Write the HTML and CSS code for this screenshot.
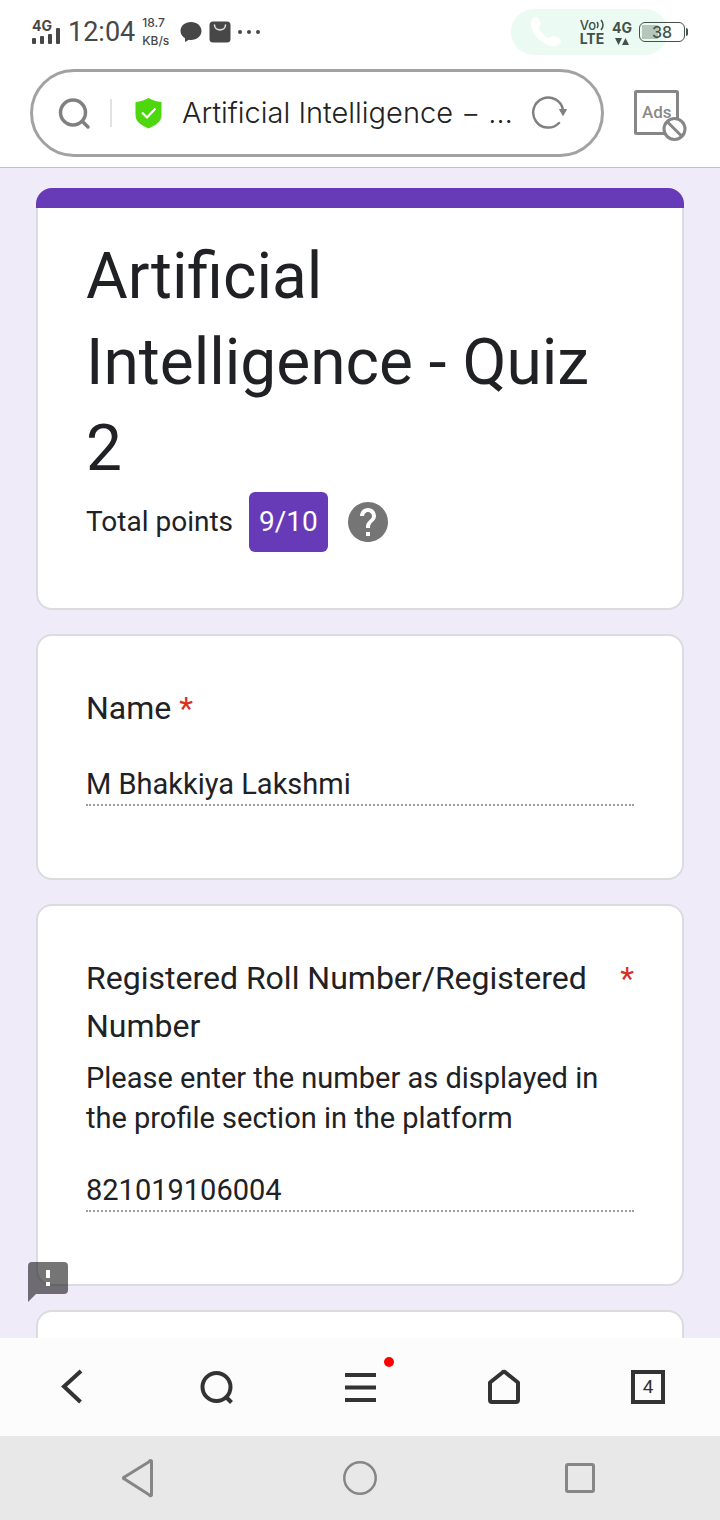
FILE: index.html
```html
<!DOCTYPE html>
<html lang="en">
<head>
<meta charset="utf-8">
<meta name="viewport" content="width=device-width, initial-scale=1">
<title>Artificial Intelligence - Quiz 2</title>
<link rel="stylesheet" href="styles.css">
</head>
<body>
<div class="screen">
  <div class="status">
    <div class="status-side">
      <span class="signal">
        <span class="signal-type">4G</span>
        <svg width="28" height="16" viewBox="0 0 28 16" fill="#474747"><rect x="0" y="10" width="4" height="6" rx="1"/><rect x="8" y="8" width="4" height="8" rx="1"/><rect x="16" y="6" width="4" height="10" rx="1"/><rect x="24" y="0" width="4" height="16" rx="1"/></svg>
      </span>
      <span class="clock">12:04</span>
      <span class="speed"><span>18.7</span><span>KB/s</span></span>
      <svg class="status-chat" width="22" height="22" viewBox="0 0 22 22" fill="#474747"><path d="M11 1C5 1 .5 4.800 .5 10c0 3 1.700 5.600 4.500 7.200V21l4-2.300c.7.100 1.300.2 2 .2 6 0 10.500-3.800 10.500-8.900S17 1 11 1z"/></svg>
      <svg width="22" height="22" viewBox="0 0 22 22"><rect x=".5" y=".5" width="21" height="21" rx="3.500" fill="#474747"/><path d="M5.500 4c0 6.500 11 6.500 11 0" fill="none" stroke="#ddd" stroke-width="1.600" stroke-linecap="round"/></svg>
      <svg width="22" height="4" viewBox="0 0 22 4" fill="#474747"><circle cx="2" cy="2" r="2"/><circle cx="11" cy="2" r="2"/><circle cx="20" cy="2" r="2"/></svg>
    </div>
    <div class="call">
      <svg width="32" height="32" viewBox="0 0 32 32" fill="#fff"><path d="M3 2C7-1 9 2 10.500 6c1 2.500-.5 4-2 5.500 2 5 5.500 8.500 10.500 11 1.500-2 3.500-3 6-2 4 1.500 8 3.500 5 7-2.500 3.500-8 4-14 .5C8 24 2.500 17 1 10 .3 6 1 3.500 3 2z"/></svg>
    </div>
    <div class="status-side status-right">
      <span class="volte"><span class="volte-top">Vo<svg width="9" height="12" viewBox="0 0 9 12" fill="none" stroke="#44514a" stroke-width="1.500"><path d="M1 3q2 3 0 6M5 1q4 5 0 10"/></svg></span><span>LTE</span></span>
      <span class="net"><span>4G</span><svg width="14" height="8" viewBox="0 0 14 8" fill="#44514a"><path d="M0 1h7L3.500 8zM7 8h7L10.500 1z"/></svg></span>
      <span class="battery"><span>38</span></span>
    </div>
  </div>

  <header class="toolbar">
    <div class="address">
      <svg width="34" height="34" viewBox="0 0 34 34" fill="none" stroke="#808080" stroke-width="3.500" stroke-linecap="round"><circle cx="15" cy="16.500" r="12.500"/><path d="M24.500 25.500l5.500 5.500"/></svg>
      <span class="divider"></span>
      <svg width="28" height="32" viewBox="0 0 28 32"><path d="M13.500 1c4 2.500 8 3.500 13 4v13c0 7-6 10.500-13 13.500C6.500 28.500.5 25 .5 18V5c5-.5 9-1.500 13-4z" fill="#4cd80c"/><path d="M7 15.500l5 5 8.500-9" fill="none" stroke="#fff" stroke-width="2.200"/></svg>
      <a class="address-title" href="#quiz">Artificial Intelligence − …</a>
      <button class="icon-button" type="button" aria-label="Reload"><svg width="36" height="36" viewBox="0 0 36 36"><path d="M28 28A15 15 0 1 1 32 15" fill="none" stroke="#808080" stroke-width="2.500" stroke-linecap="round"/><path d="M28.500 14.500h7l-3.500 6z" fill="#808080" stroke="#808080" stroke-linejoin="round"/></svg></button>
    </div>
    <button class="icon-button" type="button" aria-label="Block ads"><svg width="54" height="56" viewBox="0 0 54 56" fill="none" stroke="#868686"><rect x="2.500" y="6.500" width="42" height="42" rx="1" stroke-width="3"/><text x="9" y="33" class="ads">Ads</text><circle cx="41.500" cy="44" r="10.500" fill="#fff" stroke-width="3"/><path d="M34 36.500l15 15" stroke-width="3"/></svg></button>
  </header>

  <main class="form" id="quiz">
    <section class="card card-head">
      <h1 class="title">Artificial Intelligence - Quiz 2</h1>
      <div class="points">
        <span>Total points</span>
        <span class="score">9/10</span>
        <button class="icon-button" type="button" aria-label="Help"><svg width="40" height="40" viewBox="2 2 20 20"><path fill="#757575" d="M12 2C6.480 2 2 6.480 2 12s4.480 10 10 10 10-4.480 10-10S17.520 2 12 2zm1 17h-2v-2h2v2zm2.070-7.750l-.9.920C13.450 12.900 13 13.500 13 15h-2v-.5c0-1.100.45-2.100 1.170-2.830l1.240-1.260c.37-.36.590-.86.590-1.410 0-1.100-.9-2-2-2s-2 .9-2 2H8c0-2.210 1.790-4 4-4s4 1.790 4 4c0 .88-.36 1.680-.93 2.250z"/></svg></button>
      </div>
    </section>

    <section class="card">
      <label class="label" for="name"><span>Name</span><span class="star">*</span></label>
      <input class="answer" id="name" type="text" value="M Bhakkiya Lakshmi" readonly>
    </section>

    <section class="card">
      <label class="label label-wide" for="roll"><span>Registered Roll Number/Registered Number</span><span class="star">*</span></label>
      <p class="hint">Please enter the number as displayed in the profile section in the platform</p>
      <input class="answer" id="roll" type="text" value="821019106004" readonly>
    </section>

    <section class="card card-next"></section>

    <button class="icon-button report" type="button" aria-label="Report a problem"><svg width="40" height="40" viewBox="0 0 40 40"><path fill="#000" fill-opacity=".54" d="M4 0h32a4 4 0 0 1 4 4v24a4 4 0 0 1-4 4H8L0 40V4a4 4 0 0 1 4-4z"/><path fill="#fff" d="M18 8h4v8h-4zM18 20h4v4h-4z"/></svg></button>
  </main>

  <nav class="browser-nav">
    <button class="icon-button" type="button" aria-label="Back"><svg width="40" height="40" viewBox="0 0 40 40" fill="none" stroke="#333" stroke-width="4"><path d="M29 4L12 19.500 28.500 35"/></svg></button>
    <button class="icon-button" type="button" aria-label="Search"><svg width="40" height="40" viewBox="0 0 40 40" fill="none" stroke="#333" stroke-width="4"><circle cx="20.500" cy="20" r="14"/><path d="M30 30l5.500 5.500"/></svg></button>
    <button class="icon-button menu" type="button" aria-label="Menu"><svg width="40" height="40" viewBox="0 0 40 40" stroke="#333" stroke-width="4"><path d="M5 8h31M5 20.500h31M5 33h31"/></svg><span class="dot"></span></button>
    <button class="icon-button" type="button" aria-label="Home"><svg width="40" height="40" viewBox="0 0 40 40" fill="none" stroke="#333" stroke-width="4" stroke-linejoin="round"><path d="M18.500 5.500q1.500-1.500 3 0L34 15.500V33a2 2 0 0 1-2 2H8a2 2 0 0 1-2-2V15.500z"/></svg></button>
    <button class="icon-button" type="button" aria-label="Tabs"><span class="tabs">4</span></button>
  </nav>

  <nav class="system-nav">
    <button class="icon-button" type="button" aria-label="System back"><svg width="40" height="40" viewBox="0 0 40 40" fill="none" stroke="#868686" stroke-width="3" stroke-linejoin="round"><path d="M31.500 3.500v33a1 1 0 0 1-2 .5L4.500 21a1 1 0 0 1 0-2l25-15.500a1 1 0 0 1 2 0z"/></svg></button>
    <button class="icon-button" type="button" aria-label="System home"><svg width="40" height="40" viewBox="0 0 40 40" fill="none" stroke="#868686" stroke-width="2.500"><circle cx="20" cy="20" r="15.700"/></svg></button>
    <button class="icon-button" type="button" aria-label="Recent apps"><svg width="40" height="40" viewBox="0 0 40 40" fill="none" stroke="#868686" stroke-width="3"><rect x="6.500" y="6.500" width="27" height="27" rx="1.500"/></svg></button>
  </nav>
</div>
</body>
</html>
```
FILE: styles.css
```css
* {
  box-sizing: border-box;
}

body {
  margin: 0;
  font-family: Roboto, sans-serif;
  color: #202124;
  background: #fff;
}

svg {
  display: block;
  flex: none;
}

.screen {
  display: flex;
  flex-direction: column;
  height: 100vh;
}

.icon-button {
  display: flex;
  flex: none;
  padding: 0;
  border: 0;
  background: none;
  font-family: inherit;
}

/* Phone status bar */
.status {
  position: relative;
  display: flex;
  align-items: center;
  justify-content: space-between;
  height: 64px;
  padding: 0 32px;
  font-family: Inter, sans-serif;
  color: #474747;
}

.status-side {
  display: flex;
  align-items: center;
  gap: 7px;
}

.signal {
  position: relative;
  padding-top: 8px;
}

.signal-type {
  position: absolute;
  top: -1px;
  left: 0;
  font-size: 14px;
  line-height: 14px;
  font-weight: 700;
}

.clock {
  margin-left: 1px;
  font-family: Roboto, sans-serif;
  font-size: 27px;
}

.speed {
  display: flex;
  flex-direction: column;
  font-family: Inter, sans-serif;
  font-size: 12px;
  line-height: 18px;
  font-weight: 500;
}

.status-chat {
  margin-left: 4px;
}

.call {
  position: absolute;
  top: 9px;
  right: 52px;
  display: flex;
  align-items: center;
  width: 157px;
  height: 46px;
  padding-left: 19px;
  border-radius: 23px;
  background: #ebfbf3;
}

.status-right {
  position: relative;
  color: #44514a;
}

.volte {
  display: flex;
  flex-direction: column;
  font-size: 14px;
  line-height: 14px;
  font-weight: 700;
}

.volte-top {
  display: flex;
  align-items: center;
  font-size: 13px;
  font-weight: 500;
}

.net {
  display: flex;
  flex-direction: column;
  align-items: center;
  gap: 1px;
  font-size: 14px;
  line-height: 16px;
  font-weight: 700;
}

.battery {
  position: relative;
  width: 46px;
  height: 20px;
  margin-right: 3px;
  border: 1px solid #44514a;
  border-radius: 6px;
  background: linear-gradient(#b5c6bb, #b5c6bb) 2px 2px / 16px 14px no-repeat;
  font-size: 16px;
  line-height: 18px;
  font-weight: 500;
  text-align: center;
}

.battery::after {
  content: "";
  position: absolute;
  top: 5px;
  right: -4px;
  width: 2px;
  height: 8px;
  border-radius: 0 2px 2px 0;
  background: #44514a;
}

/* Browser toolbar */
.toolbar {
  display: flex;
  align-items: center;
  gap: 29px;
  height: 104px;
  padding: 0 33px 6px 30px;
  border-bottom: 1px solid #c2bfcc;
}

.address {
  display: flex;
  align-items: center;
  flex: 1;
  min-width: 0;
  height: 88px;
  padding: 0 34px 0 25px;
  border: 3px solid #a2a2a2;
  border-radius: 44px;
}

.divider {
  width: 2px;
  height: 28px;
  margin: 0 23px 0 18px;
  background: #e2e2e2;
}

.address-title {
  flex: 1;
  min-width: 0;
  margin-left: 19px;
  overflow: hidden;
  font-family: Inter, sans-serif;
  font-size: 29px;
  font-weight: 300;
  line-height: 40px;
  white-space: nowrap;
  color: #222;
  text-decoration: none;
}

.ads {
  font-family: Roboto, sans-serif;
  font-size: 17px;
  font-weight: 500;
  fill: #8a8a8a;
  stroke: none;
}

/* Form */
.form {
  position: relative;
  display: flex;
  flex: 1;
  flex-direction: column;
  gap: 24px;
  min-height: 0;
  padding: 20px 36px 0;
  overflow: hidden;
  background: #efebf8;
}

.card {
  flex: none;
  padding: 48px 48px 72px;
  border: 2px solid #dadce0;
  border-radius: 16px;
  background: #fff;
}

.card-head {
  position: relative;
  padding: 44px 48px 56px;
}

.card-head::before {
  content: "";
  position: absolute;
  top: -2px;
  right: -2px;
  left: -2px;
  height: 20px;
  border-radius: 16px 16px 0 0;
  background: #673ab7;
}

.card-next {
  min-height: 200px;
}

.title {
  margin: 0;
  font-size: 64px;
  font-weight: 400;
  line-height: 86px;
}

.points {
  display: flex;
  align-items: center;
  font-size: 28px;
  line-height: 40px;
}

.score {
  margin: 0 20px 0 16px;
  padding: 10px;
  border-radius: 6px;
  background: #673ab7;
  color: #fff;
}

.label {
  display: flex;
  gap: 8px;
  font-size: 32px;
  line-height: 48px;
}

.label-wide {
  gap: 32px;
  justify-content: space-between;
}

.star {
  color: #d93025;
}

.hint {
  margin: 8px 0 0;
  font-size: 29px;
  line-height: 40px;
}

.answer {
  display: block;
  width: 100%;
  height: 42px;
  margin-top: 32px;
  padding: 0;
  border: 0;
  border-bottom: 2px dotted #9e9e9e;
  outline: 0;
  background: none;
  font-family: inherit;
  font-size: 29px;
  color: inherit;
}

.report {
  position: absolute;
  bottom: 36px;
  left: 28px;
}

/* Bottom bars */
.browser-nav {
  display: grid;
  grid-template-columns: repeat(5, 1fr);
  align-items: center;
  justify-items: center;
  height: 98px;
  background: #fcfcfc;
}

.menu {
  position: relative;
}

.dot {
  position: absolute;
  top: -10px;
  right: -14px;
  width: 10px;
  height: 10px;
  border-radius: 50%;
  background: #f00;
}

.tabs {
  width: 34px;
  height: 34px;
  border: 4px solid #333;
  font-size: 19px;
  line-height: 26px;
  text-align: center;
  color: #333;
}

.system-nav {
  display: grid;
  grid-template-columns: repeat(3, 1fr);
  align-items: center;
  justify-items: center;
  height: 84px;
  padding: 0 30px;
  background: #e8e8e8;
}
```
